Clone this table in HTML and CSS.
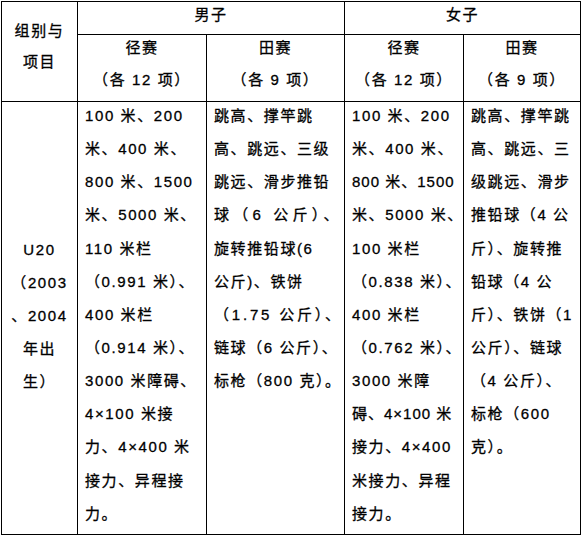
FILE: index.html
```html
<!DOCTYPE html>
<html lang="zh-CN">
<head>
<meta charset="utf-8">
<title>U20 比赛项目</title>
<link rel="stylesheet" href="styles.css">
</head>
<body>
<div class="sheet">
  <div class="cell group"><div class="txt">组别与<br>项目</div></div>
  <div class="cell sex"><div class="txt">男子</div></div>
  <div class="cell sex"><div class="txt">女子</div></div>

  <div class="cell sub"><div class="txt">径赛<br>（各 12 项）</div></div>
  <div class="cell sub"><div class="txt">田赛<br>（各 9 项）</div></div>
  <div class="cell sub"><div class="txt">径赛<br>（各 12 项）</div></div>
  <div class="cell sub"><div class="txt">田赛<br>（各 9 项）</div></div>

  <div class="cell age"><div class="txt">U20<br>（2003<br>、2004<br>年出<br>生）</div></div>
  <div class="cell body c2"><div class="txt">100 米、200<br>米、400 米、<br>800 米、1500<br>米、5000 米、<br>110 米栏<br>（0.991 米）、<br>400 米栏<br>（0.914 米）、<br>3000 米障碍、<br>4×100 米接<br>力、4×400 米<br>接力、异程接<br>力。</div></div>
  <div class="cell body c3"><div class="txt">跳高、撑竿跳<br>高、跳远、三级<br>跳远、滑步推铅<br><span class="wide">球（6 公斤）、</span><br>旋转推铅球(6<br>公斤)、铁饼<br><span class="loose">（1.75 公斤）、</span><br>链球（6 公斤）、<br>标枪（800 克）。</div></div>
  <div class="cell body c4"><div class="txt">100 米、200<br>米、400 米、<br><span class="tight">800 米、1500</span><br>米、5000 米、<br>100 米栏<br>（0.838 米）、<br>400 米栏<br>（0.762 米）、<br>3000 米障<br><span class="tight">碍、4×100 米</span><br>接力、4×400<br>米接力、异程<br>接力。</div></div>
  <div class="cell body c5"><div class="txt">跳高、撑竿跳<br>高、跳远、三<br>级跳远、滑步<br>推铅球（4 公<br>斤）、旋转推<br>铅球（4 公<br>斤）、铁饼（1<br>公斤）、链球<br>（4 公斤）、<br>标枪（600<br>克）。</div></div>
</div>
</body>
</html>
```

FILE: styles.css
```css
html, body {
  margin: 0;
  background: #fff;
}
body {
  font-family: "Liberation Sans", "Noto Sans CJK SC", sans-serif;
  font-size: 15px;
  color: #000;
}
.sheet {
  display: grid;
  grid-template-columns: 75px 128px 137px 118px 116px;
  grid-template-rows: 32px 66px 432px;
  gap: 1px;
  padding: 1px;
  background: #000;
  width: max-content;
  margin: 1px 0 0 1px;
}
.cell {
  background: #fff;
  padding: 0 7px;
  overflow: hidden;
}
.txt {
  line-height: 33.15px;
  white-space: nowrap;
  letter-spacing: 1.6px;
  -webkit-text-stroke: 0.3px #000;
}
.wide {
  letter-spacing: 4.2px;
}
.loose {
  letter-spacing: 2.8px;
}
.tight {
  letter-spacing: 1px;
}
.group {
  grid-row: 1 / span 2;
  text-align: center;
  padding-top: 13px;
}
.group .txt {
  line-height: 31px;
}
.sex {
  grid-column: span 2;
  text-align: center;
}
.sex .txt {
  margin-top: -4.4px;
}
.sub {
  text-align: center;
}
.sub .txt {
  line-height: 32px;
  margin-top: -3px;
}
.age {
  display: flex;
  flex-direction: column;
  justify-content: center;
  text-align: center;
  padding-bottom: 2px;
}
.age .txt {
  margin-top: -3.1px;
}
.body .txt {
  margin-top: -3.1px;
}
```
